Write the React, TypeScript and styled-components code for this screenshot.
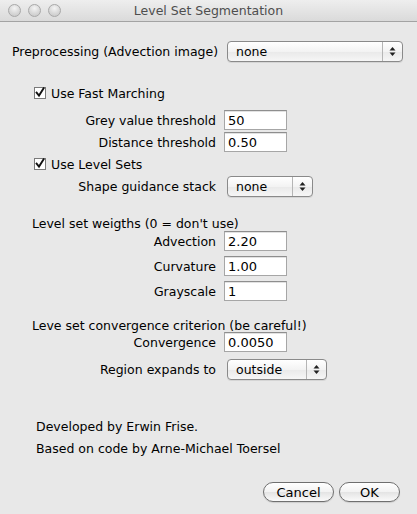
import React from 'react'
import styled, { createGlobalStyle } from 'styled-components'

const GlobalStyle = createGlobalStyle`
  html, body {
    margin: 0;
    padding: 0;
    background: #e8e8e8;
  }
  body {
    font-family: 'DejaVu Sans', 'Liberation Sans', sans-serif;
    font-size: 12.5px;
    color: #000;
  }
`

const Window = styled.div`
  width: 417px;
  height: 514px;
  background: #e8e8e8;
  display: flex;
  flex-direction: column;
  overflow: hidden;
`
const TitleBar = styled.div`
  height: 21px;
  flex: none;
  display: flex;
  align-items: center;
  background: linear-gradient(#eeeeee, #dadada);
  border-bottom: 1px solid #a3a3a3;
`
const Lights = styled.div`
  width: 61px;
  flex: none;
  display: flex;
  gap: 7px;
  padding-left: 8px;
  box-sizing: border-box;
`
const Light = styled.span`
  width: 13px;
  height: 13px;
  border-radius: 50%;
  box-sizing: border-box;
  border: 1px solid #a8a8a8;
  background: radial-gradient(circle at 50% 30%, #f4f4f4 0%, #d8d8d8 55%, #c4c4c4 100%);
`
const Title = styled.div`
  flex: 1;
  text-align: center;
  color: #4e4e4e;
  font-size: 12.5px;
`
const Spacer = styled.div`
  width: 61px;
  flex: none;
`
const Body = styled.div`
  flex: 1;
  display: flex;
  flex-direction: column;
  padding: 0 14px 0 12px;
`
const Row = styled.div<{ $top: number; $indent?: number; $height?: number }>`
  display: flex;
  align-items: center;
  margin-top: ${({ $top }) => $top}px;
  padding-left: ${({ $indent }) => $indent ?? 0}px;
  height: ${({ $height }) => ($height ? `${$height}px` : 'auto')};
`
const PlainLabel = styled.span`
  white-space: nowrap;
`
const FieldLabel = styled.label`
  width: 204px;
  flex: none;
  text-align: right;
  margin-right: 8px;
  white-space: nowrap;
`
const TextField = styled.div`
  width: 63px;
  height: 20px;
  box-sizing: border-box;
  background: #fff;
  border: 1px solid #a6a6a6;
  border-top-color: #8e8e8e;
  box-shadow: inset 0 1px 0 #e2e2e2;
  display: flex;
  align-items: center;
  padding: 1px 3px 0;
  font-size: 13px;
`
const Popup = styled.div<{ $width: number }>`
  width: ${({ $width }) => $width}px;
  height: 21px;
  box-sizing: border-box;
  margin-left: 3px;
  border: 1px solid #8a8a8a;
  border-radius: 4px;
  background: linear-gradient(#ffffff, #f3f3f3 50%, #e9e9e9 51%, #f6f6f6);
  box-shadow: 0 1px 0 rgba(0, 0, 0, 0.08);
  display: flex;
  align-items: stretch;
`
const PopupText = styled.span`
  flex: 1;
  padding-left: 8px;
  display: flex;
  align-items: center;
`
const PopupArrows = styled.span`
  width: 19px;
  flex: none;
  border-left: 1px solid #b5b5b5;
  display: flex;
  align-items: center;
  justify-content: center;
`
const CheckRow = styled.label`
  display: flex;
  align-items: center;
  gap: 5px;
`
const Footer = styled.div`
  display: flex;
  flex-direction: column;
  gap: 7px;
  margin-top: 39px;
  padding-left: 24px;
`
const ButtonBar = styled.div`
  display: flex;
  justify-content: flex-end;
  gap: 5px;
  margin-top: 26px;
  padding-right: 3px;
`
const PushButton = styled.button<{ $width: number }>`
  width: ${({ $width }) => $width}px;
  height: 20px;
  box-sizing: border-box;
  border: 1px solid #6f6f6f;
  border-radius: 10px;
  background: linear-gradient(#ffffff, #f2f2f2 50%, #e4e4e4 51%, #fafafa);
  font-family: inherit;
  font-size: 13px;
  color: #000;
  padding: 0;
  box-shadow: 0 1px 1px rgba(0, 0, 0, 0.12);
`

function Arrows() {
  return (
    <svg width="7" height="11" viewBox="0 0 7 11">
      <path d="M3.5 1 L6.5 4.5 L0.5 4.5 Z" fill="#222" />
      <path d="M3.5 10 L6.5 6.5 L0.5 6.5 Z" fill="#222" />
    </svg>
  )
}

function CheckBox() {
  return (
    <svg width="12" height="12" viewBox="0 0 12 12">
      <rect x="0.5" y="0.5" width="11" height="11" fill="#fff" stroke="#7a7a7a" />
      <path d="M2.6 5.6 L5 8.6 L9.6 1.4" fill="none" stroke="#111" strokeWidth="1.9" strokeLinecap="square" />
    </svg>
  )
}

function Select({ value, width }: { value: string; width: number }) {
  return (
    <Popup $width={width}>
      <PopupText>{value}</PopupText>
      <PopupArrows>
        <Arrows />
      </PopupArrows>
    </Popup>
  )
}

function Field({ label, value, top }: { label: string; value: string; top: number }) {
  return (
    <Row $top={top}>
      <FieldLabel>{label}</FieldLabel>
      <TextField>{value}</TextField>
    </Row>
  )
}

export default function App() {
  return (
    <Window>
      <GlobalStyle />
      <TitleBar>
        <Lights>
          <Light />
          <Light />
          <Light />
        </Lights>
        <Title>Level Set Segmentation</Title>
        <Spacer />
      </TitleBar>
      <Body>
        <Row $top={19}>
          <PlainLabel>Preprocessing (Advection image)</PlainLabel>
          <span style={{ flex: 1 }} />
          <Select value="none" width={176} />
        </Row>

        <Row $top={23} $indent={22} $height={16}>
          <CheckRow>
            <CheckBox />
            Use Fast Marching
          </CheckRow>
        </Row>
        <Field label="Grey value threshold" value="50" top={9} />
        <Field label="Distance threshold" value="0.50" top={2} />
        <Row $top={4} $indent={22} $height={16}>
          <CheckRow>
            <CheckBox />
            Use Level Sets
          </CheckRow>
        </Row>
        <Row $top={4}>
          <FieldLabel>Shape guidance stack</FieldLabel>
          <Select value="none" width={86} />
        </Row>

        <Row $top={18} $indent={20} $height={16}>
          <PlainLabel>Level set weigths (0 = don't use)</PlainLabel>
        </Row>
        <Field label="Advection" value="2.20" top={0} />
        <Field label="Curvature" value="1.00" top={5} />
        <Field label="Grayscale" value="1" top={5} />

        <Row $top={17} $indent={20} $height={14}>
          <PlainLabel>Leve set convergence criterion (be careful!)</PlainLabel>
        </Row>
        <Field label="Convergence" value="0.0050" top={0} />
        <Row $top={7}>
          <FieldLabel>Region expands to</FieldLabel>
          <Select value="outside" width={100} />
        </Row>

        <Footer>
          <PlainLabel>Developed by Erwin Frise.</PlainLabel>
          <PlainLabel>Based on code by Arne-Michael Toersel</PlainLabel>
        </Footer>
        <ButtonBar>
          <PushButton $width={71}>Cancel</PushButton>
          <PushButton $width={61}>OK</PushButton>
        </ButtonBar>
      </Body>
    </Window>
  )
}
